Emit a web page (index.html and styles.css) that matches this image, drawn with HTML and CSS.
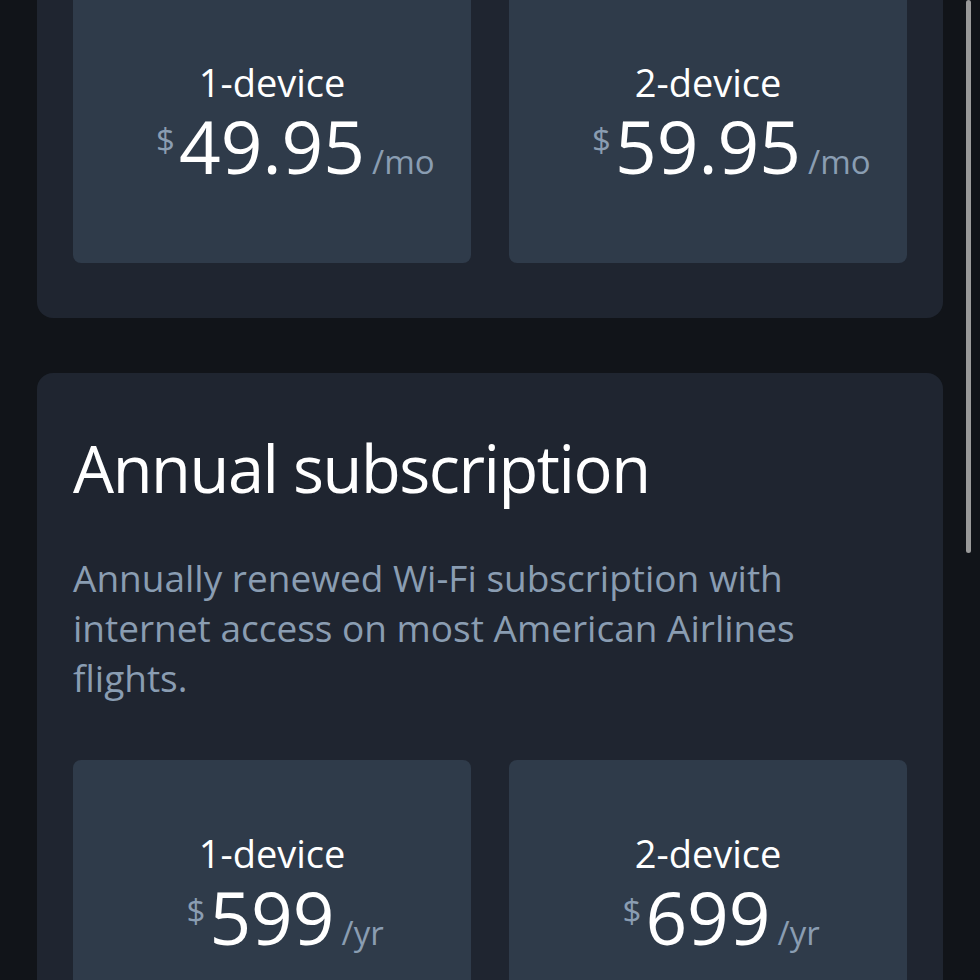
FILE: index.html
```html
<!DOCTYPE html>
<html lang="en">
<head>
    <meta charset="UTF-8">
    <meta name="viewport" content="width=device-width, initial-scale=1.0">
    <title>Wi-Fi subscriptions</title>
    <link rel="stylesheet" href="styles.css">
</head>
<body>
    <div class="page">
        <section class="plan plan-scrolled">
            <div class="options">
                <div class="option">
                    <div class="option-label">1-device</div>
                    <div class="price">
                        <span class="currency">$</span>
                        <span class="amount">49.95</span>
                        <span class="unit">/mo</span>
                    </div>
                </div>
                <div class="option">
                    <div class="option-label">2-device</div>
                    <div class="price">
                        <span class="currency">$</span>
                        <span class="amount">59.95</span>
                        <span class="unit">/mo</span>
                    </div>
                </div>
            </div>
        </section>

        <section class="plan">
            <h2 class="plan-title">Annual subscription</h2>
            <p class="plan-desc">Annually renewed Wi-Fi subscription with internet access on most American Airlines flights.</p>
            <div class="options">
                <div class="option">
                    <div class="option-label">1-device</div>
                    <div class="price">
                        <span class="currency">$</span>
                        <span class="amount">599</span>
                        <span class="unit">/yr</span>
                    </div>
                </div>
                <div class="option">
                    <div class="option-label">2-device</div>
                    <div class="price">
                        <span class="currency">$</span>
                        <span class="amount">699</span>
                        <span class="unit">/yr</span>
                    </div>
                </div>
            </div>
        </section>
    </div>
    <div class="scrollbar"></div>
</body>
</html>
```

FILE: styles.css
```css
html, body {
    height: 100%;
}
body {
    margin: 0;
    overflow: hidden;
    font-family: "Open Sans", "Noto Sans", sans-serif;
    background-color: #111419;
    color: #fff;
}
.page {
    padding: 0 37px;
}
.plan {
    background-color: #1f2530;
    border-radius: 16px;
    padding: 63px 36px 55px;
}
.plan + .plan {
    margin-top: 55px;
}
.plan-scrolled {
    margin-top: -47px;
    padding-top: 36px;
}
.plan-title {
    margin: 0;
    font-size: 65px;
    font-weight: 400;
    letter-spacing: -1.45px;
    line-height: 1;
}
.plan-desc {
    margin: 52px 0 0;
    font-size: 37px;
    line-height: 50px;
    color: #8a9db2;
    max-width: 740px;
}
.plan-desc + .options {
    margin-top: 57px;
}
.options {
    display: grid;
    grid-template-columns: 1fr 1fr;
    gap: 38px;
}
.option {
    height: 274px;
    box-sizing: border-box;
    padding-top: 74px;
    background-color: #2f3b4a;
    border-radius: 8px;
    text-align: center;
}
.option-label {
    font-size: 38px;
    line-height: 1;
}
.price {
    display: grid;
    grid-template-columns: 1fr auto 1fr;
    align-items: baseline;
    margin-top: 8px;
    line-height: 1;
}
.amount {
    font-size: 73px;
}
.currency {
    justify-self: end;
    align-self: start;
    margin: 14px 4px 0 0;
    font-size: 33px;
    color: #8a9db2;
}
.unit {
    justify-self: start;
    margin-left: 7px;
    font-size: 33px;
    color: #8a9db2;
}
.scrollbar {
    position: fixed;
    top: 0;
    right: 9px;
    width: 5px;
    height: 553px;
    border-radius: 3px;
    background-color: #9a9a9a;
}
```
